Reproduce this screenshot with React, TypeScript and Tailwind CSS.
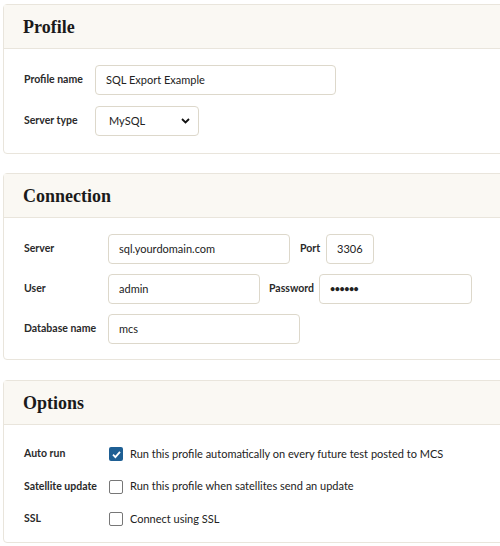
import React from "react";

const sans = { fontFamily: "Lato, 'Noto Sans', Arial, sans-serif" };

function Card({ title, children, className = "" }: { title: string; children: React.ReactNode; className?: string }) {
  return (
    <div className={`w-[510px] rounded-[4px] border border-[#e9e5dc] bg-white ${className}`}>
      <div className="flex h-[44px] items-center border-b border-[#e9e5dc] bg-[#faf8f3] px-[19px] pt-[2px]">
        <h2 className="text-[18px] font-bold text-[#1a1a1a] [font-family:'Liberation_Serif',Georgia,serif]">{title}</h2>
      </div>
      {children}
    </div>
  );
}

function Input({ value, w, type = "text" }: { value: string; w: string; type?: string }) {
  return (
    <div className={`flex h-[30px] ${w} shrink-0 items-center whitespace-nowrap rounded-[4px] border border-[#ddd8cb] bg-white px-[10px] text-[11px] text-[#222]`}>
      {type === "password" ? <span className="text-[9px] font-bold tracking-[-0.5px]">••••••</span> : value}
    </div>
  );
}

function Label({ children, w }: { children: React.ReactNode; w: string }) {
  return <div className={`${w} shrink-0 whitespace-nowrap text-[10.5px] font-bold text-[#2a2a2a]`}>{children}</div>;
}

function Check({ checked }: { checked?: boolean }) {
  return checked ? (
    <div className="flex h-[14px] w-[14px] shrink-0 items-center justify-center rounded-[2px] bg-[#1e5f94]">
      <svg width="11" height="11" viewBox="0 0 12 12">
        <path d="M2.2 6.2 L4.8 8.8 L9.8 3.2" fill="none" stroke="white" strokeWidth="2" />
      </svg>
    </div>
  ) : (
    <div className="h-[14px] w-[14px] shrink-0 rounded-[2px] border border-[#777] bg-white" />
  );
}

export default function App() {
  return (
    <div className="h-[546px] w-[500px] overflow-hidden bg-white pl-[3px] pt-[4px]" style={sans}>
      <Card title="Profile">
        <div className="flex flex-col gap-[11px] px-[20px] pb-[17px] pt-[16px]">
          <div className="flex items-center">
            <Label w="w-[71px]">Profile name</Label>
            <Input value="SQL Export Example" w="w-[241px]" />
          </div>
          <div className="flex items-center">
            <Label w="w-[71px]">Server type</Label>
            <div className="flex h-[30px] w-[104px] items-center justify-between rounded-[4px] border border-[#ddd8cb] bg-white pl-[13px] pr-[8px] text-[11px] text-[#222]">
              <span>MySQL</span>
              <svg width="9" height="6" viewBox="0 0 9 6">
                <path d="M1 1 L4.5 4.5 L8 1" fill="none" stroke="#111" strokeWidth="1.8" />
              </svg>
            </div>
          </div>
        </div>
      </Card>

      <Card title="Connection" className="mt-[19px]">
        <div className="flex flex-col gap-[10px] px-[20px] pb-[15px] pt-[16px]">
          <div className="flex items-center">
            <Label w="w-[84px]">Server</Label>
            <Input value="sql.yourdomain.com" w="w-[182px]" />
            <Label w="w-[26px] ml-[10px]">Port</Label>
            <Input value="3306" w="w-[48px]" />
          </div>
          <div className="flex items-center">
            <Label w="w-[84px]">User</Label>
            <Input value="admin" w="w-[152px]" />
            <Label w="w-[50px] ml-[9px]">Password</Label>
            <Input value="" type="password" w="w-[153px]" />
          </div>
          <div className="flex items-center">
            <Label w="w-[84px]">Database name</Label>
            <Input value="mcs" w="w-[192px]" />
          </div>
        </div>
      </Card>

      <Card title="Options" className="mt-[20px]">
        <div className="flex flex-col gap-[16.5px] px-[20px] pb-[15px] pt-[21px]">
          {[
            { l: "Auto run", t: "Run this profile automatically on every future test posted to MCS", c: true },
            { l: "Satellite update", t: "Run this profile when satellites send an update", c: false },
            { l: "SSL", t: "Connect using SSL", c: false },
          ].map((r) => (
            <div key={r.l} className="flex h-[16px] items-center">
              <Label w="w-[85px]">{r.l}</Label>
              <Check checked={r.c} />
              <span className="ml-[7px] whitespace-nowrap text-[11px] text-[#222]">{r.t}</span>
            </div>
          ))}
        </div>
      </Card>
    </div>
  );
}
